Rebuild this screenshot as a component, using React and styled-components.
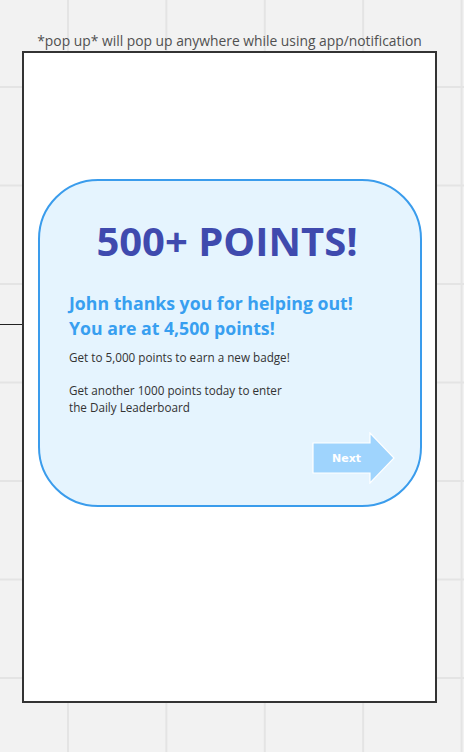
import styled, { createGlobalStyle } from 'styled-components';

const GlobalStyle = createGlobalStyle`
  html, body {
    margin: 0;
    padding: 0;
  }
  body {
    font-family: 'Open Sans', 'Liberation Sans', sans-serif;
  }
`;

export default function App() {
  return (
    <Canvas>
      <GlobalStyle />
      <Caption>*pop up* will pop up anywhere while using app/notification</Caption>
      <Frame>
        <Connector />
        <Card>
          <Title>500+ POINTS!</Title>
          <Lead>
            John thanks you for helping out!
            <br />
            You are at 4,500 points!
          </Lead>
          <Body>Get to 5,000 points to earn a new badge!</Body>
          <Body spaced>
            Get another 1000 points today to enter
            <br />
            the Daily Leaderboard
          </Body>
          <Footer>
            <NextButton>
              <svg width="84" height="52" viewBox="0 0 84 52">
                <path
                  d="M1 11 H58 V1 L82 26 L58 51 V41 H1 Z"
                  fill="#9fd4fd"
                  stroke="#ffffff"
                  strokeWidth="1.2"
                />
              </svg>
              <NextLabel>Next</NextLabel>
            </NextButton>
          </Footer>
        </Card>
      </Frame>
    </Canvas>
  );
}

const Canvas = styled.div`
  width: 464px;
  height: 752px;
  box-sizing: border-box;
  overflow: hidden;
  background-color: #f2f2f2;
  background-image:
    linear-gradient(to right, #e4e4e4 2px, transparent 2px),
    linear-gradient(to bottom, #e4e4e4 2px, transparent 2px);
  background-size: 98.4px 98.5px;
  background-position: 67px 86px;
  padding-top: 31px;
  display: flex;
  flex-direction: column;
`;

const Caption = styled.div`
  font-size: 13.85px;
  line-height: 20px;
  color: #505050;
  text-align: center;
  width: 415px;
  margin-left: 22px;
  white-space: nowrap;
`;

const Frame = styled.div`
  position: relative;
  width: 415px;
  height: 652px;
  margin-left: 22px;
  box-sizing: border-box;
  border: 2px solid #333333;
  background: #ffffff;
  padding: 126px 0 0 14px;
`;

const Connector = styled.div`
  position: absolute;
  left: -24px;
  top: 271px;
  width: 22px;
  height: 1px;
  background: #222222;
`;

const Card = styled.div`
  width: 384px;
  height: 328px;
  box-sizing: border-box;
  border: 2px solid #3a9cec;
  border-radius: 60px;
  background: #e5f4fe;
  padding: 32px 0 0 29px;
  display: flex;
  flex-direction: column;
`;

const Title = styled.h1`
  margin: 0 0 0 -35px;
  font-size: 40px;
  line-height: 56px;
  font-weight: 700;
  color: #3f4aae;
  text-align: center;
`;

const Lead = styled.div`
  margin-top: 22px;
  font-size: 17.7px;
  line-height: 25px;
  font-weight: 700;
  color: #389ff0;
`;

const Body = styled.p`
  margin: ${(p) => (p.spaced ? '16px' : '8px')} 0 0;
  font-size: 11.7px;
  line-height: 17px;
  color: #333333;
`;

const Footer = styled.div`
  display: flex;
  justify-content: flex-end;
  padding-right: 24px;
  margin-top: 16px;
`;

const NextButton = styled.div`
  position: relative;
  width: 84px;
  height: 52px;
  svg {
    display: block;
  }
`;

const NextLabel = styled.span`
  position: absolute;
  left: 6px;
  top: 11px;
  width: 57px;
  height: 30px;
  display: flex;
  align-items: center;
  justify-content: center;
  font-family: 'DejaVu Sans', Verdana, sans-serif;
  font-size: 11px;
  font-weight: 700;
  color: #ffffff;
`;
